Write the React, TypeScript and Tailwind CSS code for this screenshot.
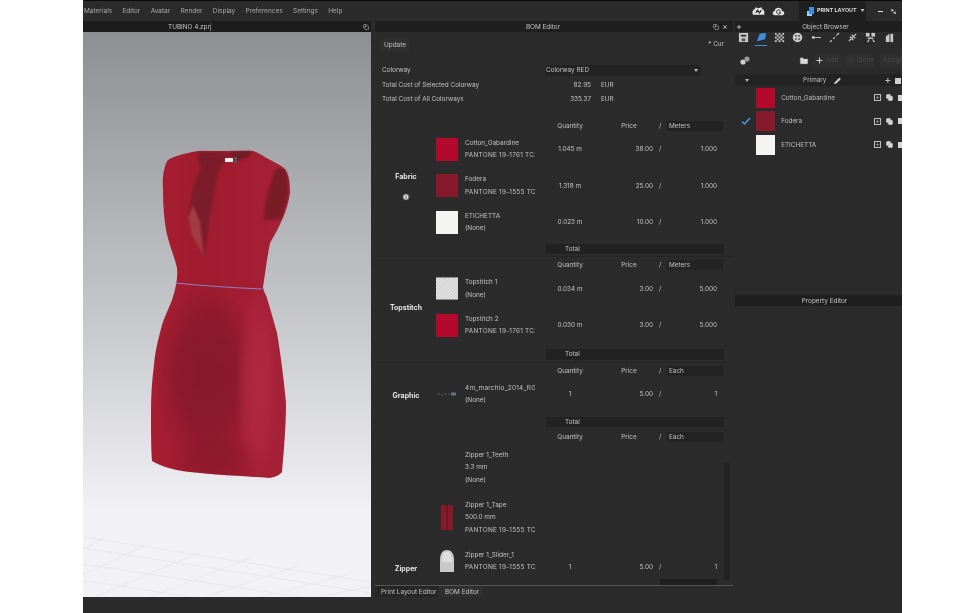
import React from 'react';
import { Copy, FolderPlus, Info, Pencil, Plus, X } from 'lucide-react';

type Item = {
    lines: string[];
    swatch: 'red' | 'maroon' | 'white' | 'hatch' | 'logo' | 'none' | 'tape' | 'slider';
    qty?: string;
    price?: string;
    amount?: string;
    h: number;
    low?: boolean;
};

type Section = {
    label: string;
    unit: string;
    info?: boolean;
    totalClass?: string;
    endClass?: string;
    labelEnd?: boolean;
    items: Item[];
};

const MENU = ['Materials', 'Editor', 'Avatar', 'Render', 'Display', 'Preferences', 'Settings', 'Help'];

const SECTIONS: Section[] = [
    {
        label: 'Fabric',
        unit: 'Meters',
        info: true,
        totalClass: 'mt-[3px]',
        endClass: 'border-b border-[#252525] pb-[2px]',
        items: [
            { lines: ['Cotton_Gabardine', 'PANTONE 19-1761 TCX'], swatch: 'red', qty: '1.045 m', price: '38.00', amount: '1.000', h: 36.5 },
            { lines: ['Fodera', 'PANTONE 19-1555 TCX'], swatch: 'maroon', qty: '1.318 m', price: '25.00', amount: '1.000', h: 36.5 },
            { lines: ['ETICHETTA', '(None)'], swatch: 'white', qty: '0.023 m', price: '10.00', amount: '1.000', h: 36.5 },
        ],
    },
    {
        label: 'Topstitch',
        unit: 'Meters',
        totalClass: 'mt-[5.5px]',
        endClass: 'border-b border-[#252525] pb-[2px]',
        items: [
            { lines: ['Topstitch 1', '(None)'], swatch: 'hatch', qty: '0.034 m', price: '3.00', amount: '5.000', h: 36.5 },
            { lines: ['Topstitch 2', 'PANTONE 19-1761 TCX'], swatch: 'red', qty: '0.030 m', price: '3.00', amount: '5.000', h: 36.5 },
        ],
    },
    {
        label: 'Graphic',
        unit: 'Each',
        totalClass: 'mt-[4px]',
        endClass: 'pb-[2px]',
        items: [{ lines: ['4m_marchio_2014_RGB', '(None)'], swatch: 'logo', qty: '1', price: '5.00', amount: '1', h: 36.5 }],
    },
    {
        label: 'Zipper',
        unit: 'Each',
        labelEnd: true,
        items: [
            { lines: ['Zipper 1_Teeth', '3.3 mm', '(None)'], swatch: 'none', h: 50 },
            { lines: ['Zipper 1_Tape', '500.0 mm', 'PANTONE 19-1555 TCX'], swatch: 'tape', h: 50 },
            { lines: ['Zipper 1_Slider_1', 'PANTONE 19-1555 TCX'], swatch: 'slider', qty: '1', price: '5.00', amount: '1', h: 37, low: true },
        ],
    },
];

function Swatch({ kind }: { kind: Item['swatch'] }) {
    if (kind === 'red') return <div className="h-[23px] w-[23px] bg-[#b3092c]" />;
    if (kind === 'maroon') return <div className="h-[23px] w-[23px] bg-[#861a2a]" />;
    if (kind === 'white') return <div className="h-[23px] w-[23px] bg-[#f4f5f3]" />;
    if (kind === 'hatch') {
        return (
            <svg width="23" height="23" viewBox="0 0 23 23">
                <rect width="23" height="23" fill="#e6e6e6" />
                {Array.from({ length: 16 }).map((_, i) => (
                    <line key={i} x1={i * 3 - 23} y1="23" x2={i * 3} y2="0" stroke="#b4b4b4" strokeWidth="0.7" />
                ))}
            </svg>
        );
    }
    if (kind === 'logo') {
        return (
            <svg width="20" height="6" viewBox="0 0 20 6">
                <path d="M0 3h3M4 4h2M7 3h3M11 3h2" stroke="#4a5a68" strokeWidth="1" />
                <path d="M14 1.5h5v3h-5z" fill="#5d7686" />
            </svg>
        );
    }
    if (kind === 'tape') {
        return (
            <svg width="12" height="25" viewBox="0 0 12 25">
                <rect width="12" height="25" fill="#861a2a" />
                <rect x="5" width="2" height="25" fill="#6d1623" />
            </svg>
        );
    }
    if (kind === 'slider') {
        return (
            <svg width="16" height="22" viewBox="0 0 16 22">
                <path d="M1 22 L1 10 C1 3 4 0 8 0 C12 0 15 3 15 10 L15 22 Z" fill="#c9c9c9" />
                <path d="M5 2 C3 5 3 8 3 12 L13 12 C13 8 12 4 10 2 Z" fill="#dedede" />
            </svg>
        );
    }
    return <div className="h-[23px] w-[23px]" />;
}

function BomSection({ section }: { section: Section }) {
    return (
        <div className={section.endClass ?? ''}>
            <div className="flex">
                <div
                    className={`flex w-[60px] shrink-0 flex-col items-center gap-[13px] text-[7px] font-bold text-[#e6e6e6] ${
                        section.labelEnd ? 'justify-end pb-[8px]' : 'justify-center pt-[12px]'
                    }`}
                >
                    <span>{section.label}</span>
                    {section.info && <Info size={8} fill="#d8d8d8" stroke="#2a2a2a" strokeWidth={2.5} />}
                </div>
                <div className="flex flex-col">
                    <div className="flex h-[10.5px] items-center">
                        <div className="w-[99px]" />
                        <div className="w-[70px] text-center">Quantity</div>
                        <div className="w-[48px] text-center">Price</div>
                        <div className="w-[14px] pl-[6px]">/</div>
                        <div className="h-[10px] w-[56px] bg-[#232323] pl-[2px] leading-[10px]">{section.unit}</div>
                    </div>
                    {section.items.map(item => (
                        <div key={item.lines[0]} className="flex items-center" style={{ height: item.h }}>
                            <div className="flex w-[29px] shrink-0 justify-center pr-[7px]">
                                <Swatch kind={item.swatch} />
                            </div>
                            {/* long names run past the column in the editor and get clipped */}
                            <div className="flex w-[70px] flex-col gap-[4px] overflow-hidden leading-[8.5px] whitespace-nowrap">
                                {item.lines.map(line => (
                                    <span key={line} className={line.length > 17 ? 'tracking-[0.25px]' : ''}>
                                        {line}
                                    </span>
                                ))}
                            </div>
                            {item.qty && (
                                <div className={`flex ${item.low ? 'pt-[13px]' : ''}`}>
                                    <div className="w-[70px] text-center">{item.qty}</div>
                                    <div className="w-[48px] text-right">{item.price}</div>
                                    <div className="w-[14px] pl-[6px]">/</div>
                                    <div className="w-[56px] pr-[6px] text-right">{item.amount}</div>
                                </div>
                            )}
                        </div>
                    ))}
                </div>
            </div>
            {section.totalClass && (
                <div className={`ml-[170px] flex h-[10.5px] w-[178px] items-center bg-[#222222] pl-[19px] ${section.totalClass}`}>Total</div>
            )}
        </div>
    );
}

function Shade({ id, color }: { id: string; color: string }) {
    return (
        <radialGradient id={id}>
            <stop offset="0" stopColor={color} />
            <stop offset="0.55" stopColor={color} stopOpacity="0.75" />
            <stop offset="1" stopColor={color} stopOpacity="0" />
        </radialGradient>
    );
}

function Dress() {
    const body =
        'M198 151 C186 153 174 156 168 160 C164 165 162 178 163 190 C163 205 164 218 166 230 C169 245 174 255 177 268 C178 276 176 288 172 300 C168 310 164 318 162 325 C158 340 155 352 154 365 C152 380 151 395 151 410 C151 430 151 448 152 461 C162 467 172 469 182 471 C205 474 240 476 270 478 C275 477 280 475 282 472 C284 450 286 425 286 403 C284 380 280 350 277 333 C273 318 269 305 267 298 C265 293 263 290 263 287 C265 275 267 258 270 243 C279 228 287 212 290 193 C290 183 289 176 286 171 C283 167 280 165 276 163 C268 159 262 155 256 152 C254 151 253 151 252 151 Z';
    return (
        <svg className="absolute inset-0 h-full w-full" viewBox="83 32 288 565">
            <defs>
                <linearGradient id="cloth" x1="0" x2="1" y1="0" y2="0">
                    <stop offset="0" stopColor="#a61d31" />
                    <stop offset="0.45" stopColor="#a01c2f" />
                    <stop offset="0.72" stopColor="#a41e33" />
                    <stop offset="1" stopColor="#a52238" />
                </linearGradient>
                <Shade id="darkFold" color="#85182a" />
                <Shade id="lightFold" color="#ae2840" />
                <filter id="edge" x="-20%" y="-20%" width="140%" height="140%">
                    <feGaussianBlur stdDeviation="1.2" />
                </filter>
                <clipPath id="bodyClip">
                    <path d={body} />
                </clipPath>
            </defs>

            <g stroke="#e4e4ea" strokeWidth="0.8" fill="none">
                <path d="M83 537 L371 582" />
                <path d="M83 548 L371 593" />
                <path d="M83 564 L300 597" />
                <path d="M83 580 L190 597" />
                <path d="M83 550 L105 537" />
                <path d="M83 575 L145 545" />
                <path d="M95 597 L200 552" />
                <path d="M150 597 L250 558" />
                <path d="M205 597 L300 565" />
                <path d="M260 597 L350 574" />
                <path d="M320 597 L371 586" />
            </g>

            <path d={body} fill="url(#cloth)" />
            <g clipPath="url(#bodyClip)">
                <ellipse cx="207" cy="375" rx="52" ry="95" fill="url(#darkFold)" />
                <ellipse cx="215" cy="460" rx="45" ry="30" fill="url(#darkFold)" opacity="0.6" />
                <ellipse cx="258" cy="385" rx="22" ry="100" fill="url(#lightFold)" />
            </g>
            <path
                d="M197 157 L200 152 L230 153 L218 172 L212 202 L204 257 L188 217 L193 187 L201 168 Z"
                fill="#7c1f2a"
                filter="url(#edge)"
            />
            <path d="M188 217 L192 235 L204 257 L200 222 L193 205 Z" fill="#a33a45" filter="url(#edge)" />
            <path d="M230 152 L252 151 L248 157 L234 162 Z" fill="#6e1a25" filter="url(#edge)" />
            <path
                d="M277 168 C282 167 285 168 286 172 C290 182 289 200 281 219 L264 220 C264 210 266 196 270 187 C272 178 274 172 277 168 Z"
                fill="#7a1a28"
                filter="url(#edge)"
            />
            <rect x="225" y="158" width="8" height="4" fill="#eeeeee" />
            <rect x="234" y="157" width="3" height="6" fill="#5a5055" />
            <path d="M175 283 Q215 287 262 289" fill="none" stroke="#8d8bd6" strokeWidth="0.9" />
        </svg>
    );
}

function ToolIcon({ index }: { index: number }) {
    const c = '#c8c8c8';
    const drawings = [
        <g key="0"><rect x="1" y="1" width="10" height="10" fill={c} /><rect x="3" y="3" width="6" height="2" fill="#333" /><rect x="4" y="7" width="4" height="3" fill="#555" /></g>,
        <path key="1" d="M1 10 L4 2 L11 1 L10 8 Z" fill="#3f8fe0" />,
        <g key="2" fill={c}>
            {[0, 1, 2, 3, 4].flatMap(r =>
                [0, 1, 2, 3, 4].filter(col => (r + col) % 2 === 0).map(col => <rect key={`${r}-${col}`} x={1 + col * 2} y={1 + r * 2} width="2" height="2" />),
            )}
        </g>,
        <g key="3"><circle cx="6" cy="6" r="5.2" fill={c} /><g fill="#2a2a2a"><circle cx="4.3" cy="4.3" r="0.9" /><circle cx="7.7" cy="4.3" r="0.9" /><circle cx="4.3" cy="7.7" r="0.9" /><circle cx="7.7" cy="7.7" r="0.9" /></g></g>,
        <g key="4"><path d="M1 6h10" stroke={c} strokeWidth="1" /><rect x="1" y="4.7" width="3" height="2.6" fill={c} /></g>,
        <path key="5" d="M1 11l2-2M4.5 7.5l2-2M8 4l3-3" stroke={c} strokeWidth="1.2" fill="none" />,
        <path key="6" d="M2 10 L10 2 M3 5l4 4M5 3l4 4" stroke={c} strokeWidth="1.3" fill="none" />,
        <g key="7" fill={c}><rect x="1" y="1" width="4" height="4" /><rect x="7" y="1" width="4" height="4" /><rect x="3" y="6" width="6" height="1.5" /><path d="M2 11l2-3h1l-1 3zM8 8h1l2 3h-2z" /></g>,
        <g key="8" fill={c}><path d="M2 11V5l4-3v9z" /><rect x="7" y="2" width="3" height="9" /></g>,
    ];
    return (
        <svg width="11" height="11" viewBox="0 0 12 12">
            {drawings[index]}
        </svg>
    );
}

function RowIcons() {
    return (
        <div className="flex items-center gap-[5px]">
            <div className="flex h-[7px] w-[7px] items-center justify-center border border-[#bdbdbd]">
                <Plus size={5} strokeWidth={2} color="#d0d0d0" />
            </div>
            <Copy size={7} fill="#d8d8d8" stroke="#d8d8d8" />
            <div className="h-[6px] w-[4px] bg-[#d8d8d8]" />
        </div>
    );
}

function ObjectRow({ name, color, checked }: { name: string; color: string; checked?: boolean }) {
    return (
        <div className="flex h-[23.5px] items-center">
            <div className="flex w-[21px] justify-center pl-[2px]">
                {checked && (
                    <svg width="10" height="8" viewBox="0 0 10 8">
                        <path d="M1 4.5 L3.5 7 L9 1" fill="none" stroke="#4a9ae8" strokeWidth="1.4" />
                    </svg>
                )}
            </div>
            <div className="h-[20px] w-[20px]" style={{ backgroundColor: color }} />
            <div className="ml-[6px] w-[95px] text-[#bdbdbd]">{name}</div>
            <RowIcons />
        </div>
    );
}

function ObjectBrowser() {
    return (
        <div className="flex h-[272px] flex-col">
            <div className="relative flex h-[11px] items-center justify-center bg-[#1f1f1f] pt-[1px] pl-[14px] text-[#c4c4c4]">
                <Plus size={6} className="absolute left-[1px]" color="#d8d8d8" strokeWidth={3} />
                Object Browser
            </div>
            <div className="flex h-[15px] items-start gap-[6.25px] pl-[2px]">
                {[0, 1, 2, 3, 4, 5, 6, 7, 8].map(i => (
                    <div key={i} className={`flex h-[14px] w-[12px] justify-center ${i === 1 ? 'border-b border-[#3f8fe0]' : ''}`}>
                        <ToolIcon index={i} />
                    </div>
                ))}
            </div>
            <div className="flex h-[27px] items-center pl-[5px]">
                <svg width="10" height="9" viewBox="0 0 10 9">
                    <circle cx="3" cy="6" r="2.6" fill="#cfcfcf" />
                    <circle cx="7" cy="3" r="2.6" fill="#9b9b9b" />
                </svg>
                <FolderPlus size={10} fill="#d8d8d8" color="#2a2a2a" className="ml-[49px]" />
                <div className="ml-[4px] flex h-[12px] w-[28px] items-center gap-[2px] bg-[#2f2f2f] pl-[2px] text-[#4a4a4a]">
                    <Plus size={9} color="#d8d8d8" strokeWidth={2.5} />
                    Add
                </div>
                <div className="ml-[5px] flex h-[12px] w-[28px] items-center gap-[2px] bg-[#2f2f2f] pl-[3px] text-[#4a4a4a]">
                    <Copy size={7} color="#4a4a4a" />
                    Clone
                </div>
                <div className="ml-[6px] flex h-[12px] flex-1 items-center overflow-hidden bg-[#2f2f2f] pl-[3px] whitespace-nowrap text-[#4a4a4a]">Assign</div>
            </div>
            <div className="flex h-[12px] items-center bg-[#232323] pt-[1px] pr-[1px] pl-[10px] text-[#bdbdbd]">
                <span className="text-[4px]">▼</span>
                <span className="ml-[54px]">Primary</span>
                <Pencil size={8} fill="#d8d8d8" color="#d8d8d8" className="ml-[8px]" />
                <Plus size={9} color="#d8d8d8" strokeWidth={2.5} className="ml-[43px]" />
                <div className="ml-[3px] h-[6px] w-[7px] bg-[#d0d0d0]" />
            </div>
            <div className="overflow-hidden">
                <ObjectRow name="Cotton_Gabardine" color="#b3092c" />
                <ObjectRow name="Fodera" color="#861a2a" checked />
                <ObjectRow name="ETICHETTA" color="#f4f5f3" />
            </div>
        </div>
    );
}

export default function App() {
    return (
        <div className="flex h-[613px] w-[980px] overflow-hidden bg-white text-[6.4px] leading-none text-[#c2c2c2] blur-[0.35px] [font-family:Inter,'Noto_Sans',sans-serif]">
            <div className="w-[83px]" />
            <div className="flex w-[819px] flex-col border-t border-[#0c0c0c] bg-[#2b2b2b]">
                {/* menu bar */}
                <div className="flex h-[20px] shrink-0 items-center justify-between">
                    <div className="flex gap-[10.3px] pt-[1px] pl-[1px] text-[6.5px] text-[#a9a9a9]">
                        {MENU.map(m => (
                            <span key={m}>{m}</span>
                        ))}
                    </div>
                    <div className="flex h-full items-center pr-[5px]">
                        <svg width="13" height="10" viewBox="0 0 14 10">
                            <path d="M1 9 C0 6 1 3 3 3 L4 1 L7 2 L10 1 L11 3 C13 3 14 6 13 9 Z" fill="#e4e4e4" />
                            <path d="M4 7 L6 4 L8 7 L10 4" stroke="#2b2b2b" strokeWidth="1.3" fill="none" />
                        </svg>
                        <svg width="13" height="10" viewBox="0 0 14 10" className="ml-[7px]">
                            <path d="M3 9.5 C0 9.5 0 5 3 5 C3 1 10 0 11 5 C14 5 14 9.5 11 9.5 Z" fill="#e4e4e4" />
                            <path d="M9 4.5 A2.3 2.3 0 1 0 9 7.5 L9 6 L7.5 6" stroke="#2b2b2b" strokeWidth="1" fill="none" />
                        </svg>
                        <div className="ml-[14px] flex h-full w-[67px] items-center bg-[#1f1f1f] pl-[7px] whitespace-nowrap">
                            <svg width="9" height="11" viewBox="0 0 9 11">
                                <path d="M3 1 H8 V8 H3 Z" fill="#3f8fe0" />
                                <path d="M1 5 L1 10 L6 10 L6 8 L3 8 L3 5 Z" fill="#9ccbf5" />
                            </svg>
                            <span className="ml-[2px] text-[5.4px] font-bold text-[#d8d8d8]">PRINT LAYOUT</span>
                            <span className="ml-[4px] text-[4px]">▼</span>
                        </div>
                        <div className="ml-[12px] h-[1px] w-[5px] bg-[#e0e0e0]" />
                        <svg width="7" height="7" viewBox="0 0 7 7" className="ml-[7px]">
                            <path d="M1 1 L3 3 M6 6 L4 4" stroke="#d8d8d8" strokeWidth="1" />
                            <path d="M3 1 V3 H1 M4 6 V4 H6" stroke="#d8d8d8" strokeWidth="0.7" fill="none" />
                        </svg>
                    </div>
                </div>

                <div className="flex min-h-0 flex-1">
                    {/* 3D viewport */}
                    <div className="flex w-[288px] shrink-0 flex-col">
                        <div className="relative flex h-[11px] shrink-0 items-center bg-[#1c1c1c] pt-[1px] pl-[85px]">
                            TUBINO 4.zprj
                            <Copy size={6} className="absolute right-[2px]" color="#c8c8c8" />
                        </div>
                        <div className="relative flex-1 bg-linear-to-b from-[#8e8f93] via-[#c6c7cb] via-50% to-[#f2f2f6] to-85%">
                            <Dress />
                        </div>
                    </div>

                    {/* BOM editor */}
                    <div className="ml-[4px] flex w-[358px] shrink-0 flex-col">
                        <div className="relative flex h-[11px] shrink-0 items-center justify-center bg-[#1f1f1f] pt-[1px] pr-[22px]">
                            BOM Editor
                            <Copy size={6} className="absolute right-[14px]" color="#c8c8c8" />
                            <X size={6} className="absolute right-[5px]" color="#e0e0e0" strokeWidth={3} />
                        </div>
                        <div className="flex h-[25px] shrink-0 items-center justify-between px-[6px] pr-[9px]">
                            <div className="flex h-[12px] items-center bg-[#2f2f2f] px-[3px] pt-[1px]">Update</div>
                            <span>* Cur</span>
                        </div>
                        <div className="h-[6px] shrink-0" />
                        <div className="flex h-[15px] shrink-0 items-center pl-[7px]">
                            <div className="w-[163px]">Colorway</div>
                            <div className="flex h-[11px] w-[156px] items-center justify-between bg-[#232323] pr-[3px] pl-[1px]">
                                Colorway RED
                                <span className="text-[4px]">▼</span>
                            </div>
                        </div>
                        <div className="flex h-[14px] shrink-0 items-center pl-[7px]">
                            <div className="w-[185px]">Total Cost of Selected Colorway</div>
                            <div className="w-[24px] text-right">82.95</div>
                            <div className="ml-[10px]">EUR</div>
                        </div>
                        <div className="flex h-[14px] shrink-0 items-center pl-[7px]">
                            <div className="w-[185px]">Total Cost of All Colorways</div>
                            <div className="w-[24px] text-right">335.37</div>
                            <div className="ml-[10px]">EUR</div>
                        </div>

                        <div className="relative min-h-0 flex-1 overflow-hidden pt-[14.5px] pl-[1px]">
                            <div className="flex flex-col gap-[3px]">
                                {SECTIONS.map(s => (
                                    <BomSection key={s.label} section={s} />
                                ))}
                            </div>
                            <div className="absolute top-[357px] right-[3px] bottom-[5px] w-[6px] bg-[#232323]" />
                            <div className="absolute right-[16px] bottom-0 h-[6px] w-[57px] bg-[#1f1f1f]" />
                        </div>

                        <div className="h-[1px] shrink-0 bg-[#555555]" />
                        <div className="flex h-[11px] shrink-0 items-center whitespace-nowrap">
                            <div className="flex h-full w-[64px] items-center bg-[#262626] pt-[2px] pl-[6px]">Print Layout Editor</div>
                            <div className="flex h-full w-[43px] items-center bg-[#303030] pt-[2px] pl-[6px]">BOM Editor</div>
                        </div>
                    </div>

                    {/* right side panels */}
                    <div className="ml-[2px] flex min-w-0 flex-1 flex-col overflow-hidden">
                        <ObjectBrowser />
                        <div className="mt-[2px] flex h-[11px] items-center justify-center bg-[#1f1f1f] pt-[1px] pl-[12px] text-[#c4c4c4]">Property Editor</div>
                    </div>
                </div>

                <div className="h-[16px] shrink-0 bg-[#2b2b2b]" />
            </div>
            <div className="flex-1" />
        </div>
    );
}
